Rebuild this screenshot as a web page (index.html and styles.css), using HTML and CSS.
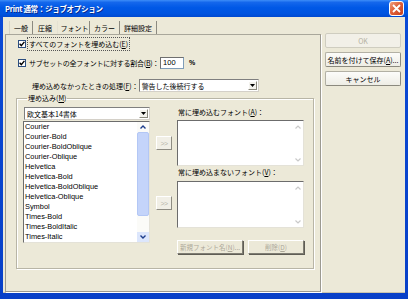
FILE: index.html
```html
<!DOCTYPE html>
<html lang="ja">
<head>
<meta charset="utf-8">
<title>Print 通常：ジョブオプション</title>
<link rel="stylesheet" href="styles.css">
</head>
<body>
<div class="window">
  <div class="titlebar">
    <span class="title">Print 通常：ジョブオプション</span>
    <span class="close"><svg width="9" height="9" viewBox="0 0 9 9"><path d="M1 1 L8 8 M8 1 L1 8" stroke="#fff" stroke-width="1.8" fill="none"/></svg></span>
  </div>
  <div class="frame">
    <div class="client">
      <div class="main">
        <div class="tabs">
          <span class="tab t1">一般</span>
          <span class="tab t2">圧縮</span>
          <span class="tab t3 active">フォント</span>
          <span class="tab t4">カラー</span>
          <span class="tab t5">詳細設定</span>
        </div>
        <div class="panel">
          <div class="row row1">
            <span class="checkbox"><svg width="6" height="6" viewBox="0 0 6 6"><path d="M0.6 2.8 L2.3 4.6 L5.4 0.9" stroke="#000" stroke-width="1.4" fill="none"/></svg></span>
            <span class="label focus">すべてのフォントを埋め込む(<u>E</u>)</span>
          </div>
          <div class="row row2">
            <span class="checkbox"><svg width="6" height="6" viewBox="0 0 6 6"><path d="M0.6 2.8 L2.3 4.6 L5.4 0.9" stroke="#000" stroke-width="1.4" fill="none"/></svg></span>
            <span class="label tight">サブセットの全フォントに対する割合(<u>B</u>)：</span>
            <span class="numbox">100</span>
            <span class="pct">%</span>
          </div>
          <div class="row row3">
            <span class="label">埋め込めなかったときの処理(<u>F</u>)：</span>
            <span class="select wide">警告した後続行する<span class="drop"><svg width="5" height="3" viewBox="0 0 5 3"><path d="M0 0 H5 L2.5 3 Z" fill="#000"/></svg></span></span>
          </div>
          <fieldset class="group">
            <legend>埋め込み(<u>M</u>)</legend>
            <div class="group-body">
              <div class="src-col">
                <span class="select combo">欧文基本14書体<span class="drop"><svg width="5" height="3" viewBox="0 0 5 3"><path d="M0 0 H5 L2.5 3 Z" fill="#000"/></svg></span></span>
                <div class="listbox fontlist">
                  <ul class="items">
                    <li>Courier</li>
                    <li>Courier-Bold</li>
                    <li>Courier-BoldOblique</li>
                    <li>Courier-Oblique</li>
                    <li>Helvetica</li>
                    <li>Helvetica-Bold</li>
                    <li>Helvetica-BoldOblique</li>
                    <li>Helvetica-Oblique</li>
                    <li>Symbol</li>
                    <li>Times-Bold</li>
                    <li>Times-BoldItalic</li>
                    <li>Times-Italic</li>
                  </ul>
                  <div class="scroll active-scroll">
                    <span class="arrow up"><svg width="6" height="4" viewBox="0 0 6 4"><path d="M0.5 3.5 L3 1 L5.5 3.5" stroke="#1D3D8C" stroke-width="1.4" fill="none"/></svg></span>
                    <span class="track"><span class="thumb"></span></span>
                    <span class="arrow down"><svg width="6" height="4" viewBox="0 0 6 4"><path d="M0.5 0.5 L3 3 L5.5 0.5" stroke="#1D3D8C" stroke-width="1.4" fill="none"/></svg></span>
                  </div>
                </div>
              </div>
              <div class="move-col">
                <span class="movebtn first">&gt;&gt;</span>
                <span class="movebtn second">&gt;&gt;</span>
              </div>
              <div class="dst-col">
                <span class="dlabel">常に埋め込むフォント(<u>A</u>)：</span>
                <div class="listbox small top">
                  <div class="scroll dis-scroll">
                    <span class="arrow"><svg width="6" height="4" viewBox="0 0 6 4"><path d="M0.5 3.5 L3 1 L5.5 3.5" stroke="#C9C9C9" stroke-width="1.2" fill="none"/></svg></span>
                    <span class="arrow"><svg width="6" height="4" viewBox="0 0 6 4"><path d="M0.5 0.5 L3 3 L5.5 0.5" stroke="#C9C9C9" stroke-width="1.2" fill="none"/></svg></span>
                  </div>
                </div>
                <span class="dlabel second">常に埋め込まないフォント(<u>V</u>)：</span>
                <div class="listbox small bottom">
                  <div class="scroll dis-scroll">
                    <span class="arrow"><svg width="6" height="4" viewBox="0 0 6 4"><path d="M0.5 3.5 L3 1 L5.5 3.5" stroke="#C9C9C9" stroke-width="1.2" fill="none"/></svg></span>
                    <span class="arrow"><svg width="6" height="4" viewBox="0 0 6 4"><path d="M0.5 0.5 L3 3 L5.5 0.5" stroke="#C9C9C9" stroke-width="1.2" fill="none"/></svg></span>
                  </div>
                </div>
                <div class="dst-buttons">
                  <span class="cbtn newname">新規フォント名(<u>N</u>)...</span>
                  <span class="cbtn remove">削除(<u>D</u>)</span>
                </div>
              </div>
            </div>
          </fieldset>
        </div>
      </div>
      <div class="side">
        <span class="btn disabled">OK</span>
        <span class="btn">名前を付けて保存(<u>A</u>)...</span>
        <span class="btn">キャンセル</span>
      </div>
    </div>
  </div>
</div>
</body>
</html>
```
FILE: styles.css
```css
* { box-sizing: border-box; }
html, body { margin: 0; padding: 0; }
body {
  width: 408px;
  height: 299px;
  overflow: hidden;
  background: #0A4AD6;
  font-family: "Noto Sans CJK JP", sans-serif;
  font-size: 7px;
  color: #000;
}
u { text-decoration: underline; text-underline-offset: 1px; }

.window {
  width: 408px;
  height: 299px;
  display: flex;
  flex-direction: column;
}

.titlebar {
  height: 17px;
  flex: none;
  display: flex;
  align-items: center;
  justify-content: space-between;
  padding: 0 4px 0 5px;
  background: linear-gradient(#3D8DF8 0%, #1467EC 14%, #0058E6 45%, #0054E0 80%, #0049D0 100%);
}
.title {
  color: #fff;
  font-weight: bold;
  font-size: 7.5px;
  line-height: 10px;
  letter-spacing: -0.3px;
  text-shadow: 1px 1px 0 #0A2A8A;
}
.close {
  width: 15px;
  height: 15px;
  display: flex;
  align-items: center;
  justify-content: center;
  border: 1px solid #fff;
  border-radius: 3px;
  background: linear-gradient(135deg, #F0A080 0%, #E0603A 45%, #C8401C 100%);
}

.frame {
  flex: 1;
  display: flex;
  padding: 0 3px 6px 3px;
  background: linear-gradient(to bottom, #0A4AD6, #0840C8);
}
.client {
  flex: 1;
  display: flex;
  background: #ECE9D8;
  border-bottom: 1px solid #C9C5B0;
}

.main {
  width: 316px;
  margin-left: 2px;
  margin-top: 4px;
  display: flex;
  flex-direction: column;
}

.tabs {
  height: 13px;
  display: flex;
  padding-left: 4px;
}
.tab {
  display: flex;
  align-items: center;
  justify-content: center;
  line-height: 10px;
  font-size: 7px;
  border-right: 1px solid #8C8A80;
}
.t1 { width: 24px; border-left: 1px solid #D8D5C6; }
.t2 { width: 25px; border-right-color: #E4E1D2; }
.t3 { width: 32px; padding-left: 2px; }
.t4 { width: 30px; }
.t5 { width: 37px; }

.panel {
  height: 258px;
  border: 1px solid #9C9A90;
  border-top-color: #A9A79B;
  box-shadow: 1px 1px 0 #FFFFFF;
  padding-top: 3px;
  display: flex;
  flex-direction: column;
}

.row {
  display: flex;
  align-items: center;
}
.row1 { height: 12px; margin-left: 12px; }
.row2 { height: 13px; margin-left: 12px; margin-top: 6px; }
.row3 { height: 13px; margin-left: 26px; margin-top: 10px; }
.label { line-height: 10px; white-space: nowrap; }
.label.tight { letter-spacing: -0.25px; }
.focus {
  outline: 1px dotted #555;
  outline-offset: 0;
  padding: 1px 1px 1px 1px;
}
.checkbox {
  width: 8px;
  height: 8px;
  flex: none;
  display: flex;
  align-items: center;
  justify-content: center;
  background: #fff;
  border: 1px solid #2B4E80;
  margin-right: 2px;
}
.row2 .checkbox { margin-right: 3px; }
.numbox {
  width: 24px;
  height: 12px;
  margin-left: 1px;
  background: #fff;
  border: 1px solid #7F9DB9;
  border-top-color: #6F6F6F;
  border-left-color: #6F6F6F;
  font-family: "Liberation Sans", sans-serif;
  font-size: 7.5px;
  line-height: 10px;
  padding-left: 2px;
}
.pct {
  margin-left: 5px;
  font-family: "Liberation Sans", sans-serif;
  font-size: 7px;
  font-weight: bold;
}

.select {
  display: flex;
  align-items: center;
  justify-content: space-between;
  background: #fff;
  border: 1px solid #7F7F7F;
  border-right-color: #D4D0C8;
  border-bottom-color: #D4D0C8;
  line-height: 10px;
  padding-left: 2px;
  padding-right: 1px;
}
.select.wide { width: 120px; height: 13px; margin-left: 0; }
.drop {
  width: 9px;
  height: 9px;
  display: flex;
  align-items: center;
  justify-content: center;
  background: #F4F3EE;
  border: 1px solid #fff;
  border-right-color: #8A887C;
  border-bottom-color: #8A887C;
}

.group {
  margin: 1px 6px 0 10px;
  padding: 4px 7px 14px 6px;
  border: 1px solid #B8B5A6;
  box-shadow: inset 1px 1px 0 #fff, 1px 1px 0 #fff;
  min-width: 0;
}
.group legend {
  padding: 0 1px;
  margin-left: 4px;
  line-height: 10px;
  font-size: 7px;
}
.group-body {
  display: flex;
  align-items: flex-start;
}

.src-col {
  width: 127px;
  display: flex;
  flex-direction: column;
}
.select.combo { height: 13px; margin-left: 1px; }
.listbox {
  background: #fff;
  border: 1px solid #6C6C6C;
  border-right-color: #E4E2D8;
  border-bottom-color: #E4E2D8;
  display: flex;
}
.fontlist {
  height: 122px;
  margin-top: 1px;
}
.items {
  list-style: none;
  margin: 0;
  padding: 0 0 0 1px;
  flex: 1;
  font-family: "Liberation Sans", sans-serif;
  font-size: 7.4px;
  line-height: 10px;
}
.items li { height: 10px; white-space: nowrap; }

.scroll {
  width: 12px;
  display: flex;
  flex-direction: column;
  justify-content: space-between;
}
.active-scroll { background: #FBFBF8; }
.arrow {
  height: 10px;
  display: flex;
  align-items: center;
  justify-content: center;
}
.active-scroll .arrow.down { background: #DCE6FC; }
.track {
  flex: 1;
  display: flex;
  flex-direction: column;
}
.thumb {
  height: 84px;
  background: #C4D4FA;
  border: 1px solid #B3C7F5;
  border-radius: 2px;
}

.move-col {
  width: 16px;
  margin-left: 6px;
  display: flex;
  flex-direction: column;
}
.movebtn {
  height: 14px;
  display: flex;
  align-items: center;
  justify-content: center;
  background: #F1EFE6;
  border: 1px solid #fff;
  border-right-color: #8E8C82;
  border-bottom-color: #8E8C82;
  color: #B8B6AA;
  font-family: "Liberation Sans", sans-serif;
  font-size: 7px;
  letter-spacing: -0.5px;
}
.movebtn.first { margin-top: 29px; }
.movebtn.second { margin-top: 46px; }

.dst-col {
  width: 127px;
  margin-left: 5px;
  display: flex;
  flex-direction: column;
}
.dlabel {
  height: 11px;
  line-height: 11px;
  padding-left: 1px;
  white-space: nowrap;
}
.dlabel.second { margin-top: 1px; }
.listbox.small { justify-content: flex-end; }
.listbox.top { height: 46px; margin-top: 2px; }
.listbox.bottom { height: 47px; margin-top: 3px; }
.dis-scroll { width: 10px; padding: 1px 0; }
.dis-scroll .arrow { height: 9px; }

.dst-buttons {
  display: flex;
  margin-top: 12px;
  gap: 5px;
}
.cbtn {
  height: 14px;
  display: flex;
  align-items: center;
  justify-content: center;
  background: #ECE9D8;
  border: 1px solid #fff;
  border-right-color: #7F7D73;
  border-bottom-color: #7F7D73;
  box-shadow: 1px 1px 0 #5F5D55;
  color: #ACA899;
  white-space: nowrap;
  font-size: 6.5px;
  line-height: 10px;
}
.cbtn.newname { width: 66px; }
.cbtn.remove { width: 56px; }

.side {
  width: 76px;
  margin-left: 4px;
  padding-top: 16px;
  display: flex;
  flex-direction: column;
  gap: 4px;
}
.btn {
  height: 15px;
  display: flex;
  align-items: center;
  justify-content: center;
  background: linear-gradient(#FCFCFA, #EEEDE5);
  border: 1px solid #B2B0A4;
  border-right-color: #8B897E;
  border-bottom-color: #8B897E;
  border-radius: 2px;
  line-height: 10px;
  white-space: nowrap;
  font-size: 7px;
}
.btn.disabled {
  color: #B5B2A3;
  border-color: #CFCDC0;
  background: #F2F0E8;
}
```
